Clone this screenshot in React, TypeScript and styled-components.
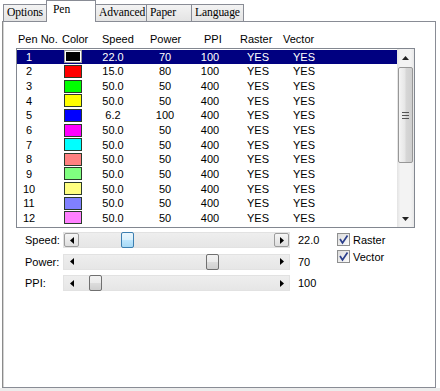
import styled, { createGlobalStyle, css } from 'styled-components';

const GlobalStyle = createGlobalStyle`
  body {
    margin: 0;
    background: #ffffff;
    font-family: 'Liberation Sans', Arial, sans-serif;
  }
`;

const TABS = [
  { label: 'Options', width: 44 },
  { label: 'Pen', width: 50 },
  { label: 'Advanced', width: 52 },
  { label: 'Paper', width: 46 },
  { label: 'Language', width: 53 },
];

const PENS = [
  { color: '#000000', speed: '22.0', power: '70', ppi: '100' },
  { color: '#ff0000', speed: '15.0', power: '80', ppi: '100' },
  { color: '#00ff00', speed: '50.0', power: '50', ppi: '400' },
  { color: '#ffff00', speed: '50.0', power: '50', ppi: '400' },
  { color: '#0000ff', speed: '6.2', power: '100', ppi: '400' },
  { color: '#ff00ff', speed: '50.0', power: '50', ppi: '400' },
  { color: '#00ffff', speed: '50.0', power: '50', ppi: '400' },
  { color: '#ff8080', speed: '50.0', power: '50', ppi: '400' },
  { color: '#80ff80', speed: '50.0', power: '50', ppi: '400' },
  { color: '#ffff80', speed: '50.0', power: '50', ppi: '400' },
  { color: '#8080ff', speed: '50.0', power: '50', ppi: '400' },
  { color: '#ff80ff', speed: '50.0', power: '50', ppi: '400' },
];

const HEADERS = [
  { label: 'Pen No.', width: 44 },
  { label: 'Color', width: 40 },
  { label: 'Speed', width: 48 },
  { label: 'Power', width: 54 },
  { label: 'PPI', width: 36 },
  { label: 'Raster', width: 43 },
  { label: 'Vector', width: 60 },
];

const SLIDERS = [
  { label: 'Speed:', value: '22.0', pos: 0.228, active: true },
  { label: 'Power:', value: '70', pos: 0.69, active: false },
  { label: 'PPI:', value: '100', pos: 0.054, active: false },
];

const ArrowLeft = () => (
  <svg width="4" height="7" viewBox="0 0 4 7">
    <polygon points="4,0 0,3.5 4,7" fill="#000" />
  </svg>
);

const ArrowRight = () => (
  <svg width="4" height="7" viewBox="0 0 4 7">
    <polygon points="0,0 4,3.5 0,7" fill="#000" />
  </svg>
);

const ArrowUp = () => (
  <svg width="7" height="4" viewBox="0 0 7 4">
    <polygon points="0,4 3.5,0 7,4" fill="#222" />
  </svg>
);

const ArrowDown = () => (
  <svg width="7" height="4" viewBox="0 0 7 4">
    <polygon points="0,0 3.5,4 7,0" fill="#222" />
  </svg>
);

const Check = () => (
  <svg width="11" height="11" viewBox="0 0 11 11">
    <path d="M2 5 L4.5 9 L9.5 1.5" stroke="#2b3f8c" strokeWidth="1.7" fill="none" />
  </svg>
);

const App = () => {
  const trackRoom = 227 - 30 - 13;

  return (
    <Root>
      <GlobalStyle />
      <TabBar>
        {TABS.map(tab => (
          <Tab key={tab.label} $selected={tab.label === 'Pen'} $width={tab.width}>
            {tab.label}
          </Tab>
        ))}
      </TabBar>
      <Panel>
        <HeaderRow>
          {HEADERS.map(h => (
            <HeaderCell key={h.label} $width={h.width}>{h.label}</HeaderCell>
          ))}
        </HeaderRow>
        <ListBox>
          <Rows>
            {PENS.map((pen, i) => (
              <Row key={i} $selected={i === 0}>
                <Cell $width={24}>{i + 1}</Cell>
                <SwatchCell>
                  <Swatch $color={pen.color} $selected={i === 0} />
                </SwatchCell>
                <Cell $width={50}>{pen.speed}</Cell>
                <Cell $width={54}>{pen.power}</Cell>
                <Cell $width={36}>{pen.ppi}</Cell>
                <Cell $width={60}>YES</Cell>
                <Cell $width={32}>YES</Cell>
              </Row>
            ))}
          </Rows>
          <ScrollBar>
            <ScrollButton><ArrowUp /></ScrollButton>
            <ScrollThumb>
              <svg width="7" height="7" viewBox="0 0 7 7">
                <rect x="0" y="0" width="7" height="1" fill="#555" />
                <rect x="0" y="3" width="7" height="1" fill="#555" />
                <rect x="0" y="6" width="7" height="1" fill="#555" />
              </svg>
            </ScrollThumb>
            <ScrollTrack />
            <ScrollButton><ArrowDown /></ScrollButton>
          </ScrollBar>
        </ListBox>
        <Controls>
          <SliderColumn>
            {SLIDERS.map(s => (
              <SliderRow key={s.label}>
                <SliderLabel>{s.label}</SliderLabel>
                <Track>
                  <TrackArrow $boxed={s.active}><ArrowLeft /></TrackArrow>
                  <TrackFill />
                  <TrackArrow $boxed={s.active}><ArrowRight /></TrackArrow>
                  <Thumb $active={s.active} style={{ left: 15 + s.pos * trackRoom }} />
                </Track>
                <SliderValue>{s.value}</SliderValue>
              </SliderRow>
            ))}
          </SliderColumn>
          <CheckColumn>
            <CheckRow>
              <CheckBox><Check /></CheckBox>
              Raster
            </CheckRow>
            <CheckRow>
              <CheckBox><Check /></CheckBox>
              Vector
            </CheckRow>
          </CheckColumn>
        </Controls>
      </Panel>
    </Root>
  );
};

export default App;

const Root = styled.div`
  width: 440px;
  height: 391px;
  box-sizing: border-box;
  padding: 0 4px 3px 2px;
  display: flex;
  flex-direction: column;
  background: linear-gradient(to top, #ececec 3px, #ffffff 3px);
  font-size: 11px;
  color: #000;
`;

const TabBar = styled.div`
  display: flex;
  align-items: flex-end;
  height: 21px;
  padding-left: 1px;
`;

const Tab = styled.div<{ $selected: boolean; $width: number }>`
  box-sizing: border-box;
  width: ${p => p.$width}px;
  height: 17px;
  margin-left: -1px;
  padding-left: 3px;
  border: 1px solid #898c95;
  border-bottom: none;
  background: linear-gradient(#f3f3f3, #e4e4e4);
  font-family: 'Liberation Serif', 'Times New Roman', serif;
  font-size: 11.6px;
  letter-spacing: -0.1px;
  line-height: 16px;
  white-space: nowrap;
  overflow: hidden;

  &:first-child {
    margin-left: 0;
  }

  ${p => p.$selected && css`
    position: relative;
    z-index: 1;
    height: 22px;
    margin-bottom: -1px;
    padding-left: 6px;
    padding-top: 1px;
    background: #ffffff;
  `}
`;

const Panel = styled.div`
  flex: 1;
  box-sizing: border-box;
  border: 1px solid #898c95;
  border-left-color: #8a8a8a;
  box-shadow: inset 1px 0 0 #d4d4d4;
  background: #ffffff;
  padding-top: 10px;
`;

const HeaderRow = styled.div`
  display: flex;
  height: 14px;
  line-height: 14px;
  padding-left: 15px;
`;

const HeaderCell = styled.div<{ $width: number }>`
  width: ${p => p.$width}px;
  white-space: nowrap;
`;

const ListBox = styled.div`
  box-sizing: border-box;
  width: 399px;
  height: 180px;
  margin: 2px 0 0 13px;
  border: 1px solid #828790;
  display: flex;
  overflow: hidden;
`;

const Rows = styled.div`
  flex: 1;
  padding-top: 0.5px;
`;

const Row = styled.div<{ $selected: boolean }>`
  display: flex;
  align-items: center;
  height: 14.65px;
  background: ${p => (p.$selected ? '#000080' : 'transparent')};
  color: ${p => (p.$selected ? '#ffffff' : '#000000')};
`;

const Cell = styled.div<{ $width: number }>`
  width: ${p => p.$width}px;
  text-align: center;
  white-space: nowrap;
`;

const SwatchCell = styled.div`
  width: 47px;
  height: 100%;
  display: flex;
  align-items: center;
  padding-left: 23px;
  box-sizing: border-box;
`;

const Swatch = styled.div<{ $color: string; $selected: boolean }>`
  box-sizing: border-box;
  width: 18px;
  height: 13px;
  background: ${p => p.$color};
  border: 1px solid ${p => (p.$selected ? '#9a9a9a' : '#2a3a2a')};
  box-shadow: ${p => (p.$selected ? 'inset 0 0 0 1px #ffffff' : 'none')};
`;

const ScrollBar = styled.div`
  width: 17px;
  display: flex;
  flex-direction: column;
  background: linear-gradient(to right, #e3e3e3, #f3f3f3 20%, #f3f3f3 80%, #e8e8e8);
`;

const ScrollButton = styled.div`
  height: 17px;
  display: flex;
  align-items: center;
  justify-content: center;
`;

const ScrollThumb = styled.div`
  box-sizing: border-box;
  height: 96px;
  margin: 1px 1px 0;
  border: 1px solid #979797;
  border-radius: 2px;
  background: linear-gradient(to right, #f4f4f4, #e6e6e6 45%, #d6d6d6 55%, #cfcfcf);
  display: flex;
  align-items: center;
  justify-content: center;
`;

const ScrollTrack = styled.div`
  flex: 1;
`;

const Controls = styled.div`
  display: flex;
  margin-top: 4px;
  padding-left: 22px;
`;

const SliderColumn = styled.div`
  display: flex;
  flex-direction: column;
  gap: 5.5px;
`;

const SliderRow = styled.div`
  display: flex;
  align-items: center;
  height: 16px;
`;

const SliderLabel = styled.div`
  width: 38px;
`;

const Track = styled.div`
  position: relative;
  box-sizing: border-box;
  width: 227px;
  height: 16px;
  display: flex;
  background: linear-gradient(#eeeeee, #e6e6e6);
  border: 1px solid #e2e2e2;
`;

const TrackArrow = styled.div<{ $boxed: boolean }>`
  box-sizing: border-box;
  width: 15px;
  height: 100%;
  display: flex;
  align-items: center;
  justify-content: center;
  border-radius: 2px;
  border: 1px solid ${p => (p.$boxed ? '#9c9c9c' : 'transparent')};
  background: ${p => (p.$boxed ? 'linear-gradient(#f6f6f6, #dedede)' : 'transparent')};
`;

const TrackFill = styled.div`
  flex: 1;
`;

const Thumb = styled.div<{ $active: boolean }>`
  position: absolute;
  top: -1px;
  box-sizing: border-box;
  width: 13px;
  height: 16px;
  border-radius: 2px;
  border: 1px solid ${p => (p.$active ? '#3c7fb1' : '#707070')};
  background: ${p =>
    p.$active
      ? 'linear-gradient(#eaf6fd, #d9f0fc 50%, #bee6fd 50%, #a7d9f5)'
      : 'linear-gradient(#f2f2f2, #ebebeb 50%, #dddddd 50%, #cfcfcf)'};
`;

const SliderValue = styled.div`
  width: 47px;
  padding-left: 8px;
  box-sizing: border-box;
`;

const CheckColumn = styled.div`
  display: flex;
  flex-direction: column;
  margin-top: -1px;
`;

const CheckRow = styled.div`
  display: flex;
  align-items: center;
  gap: 3px;
  height: 17px;
`;

const CheckBox = styled.div`
  box-sizing: border-box;
  width: 13px;
  height: 13px;
  border: 1px solid #8e8f8f;
  background: linear-gradient(135deg, #dcdcdc, #fbfbfb);
  display: flex;
  align-items: center;
  justify-content: center;
`;
